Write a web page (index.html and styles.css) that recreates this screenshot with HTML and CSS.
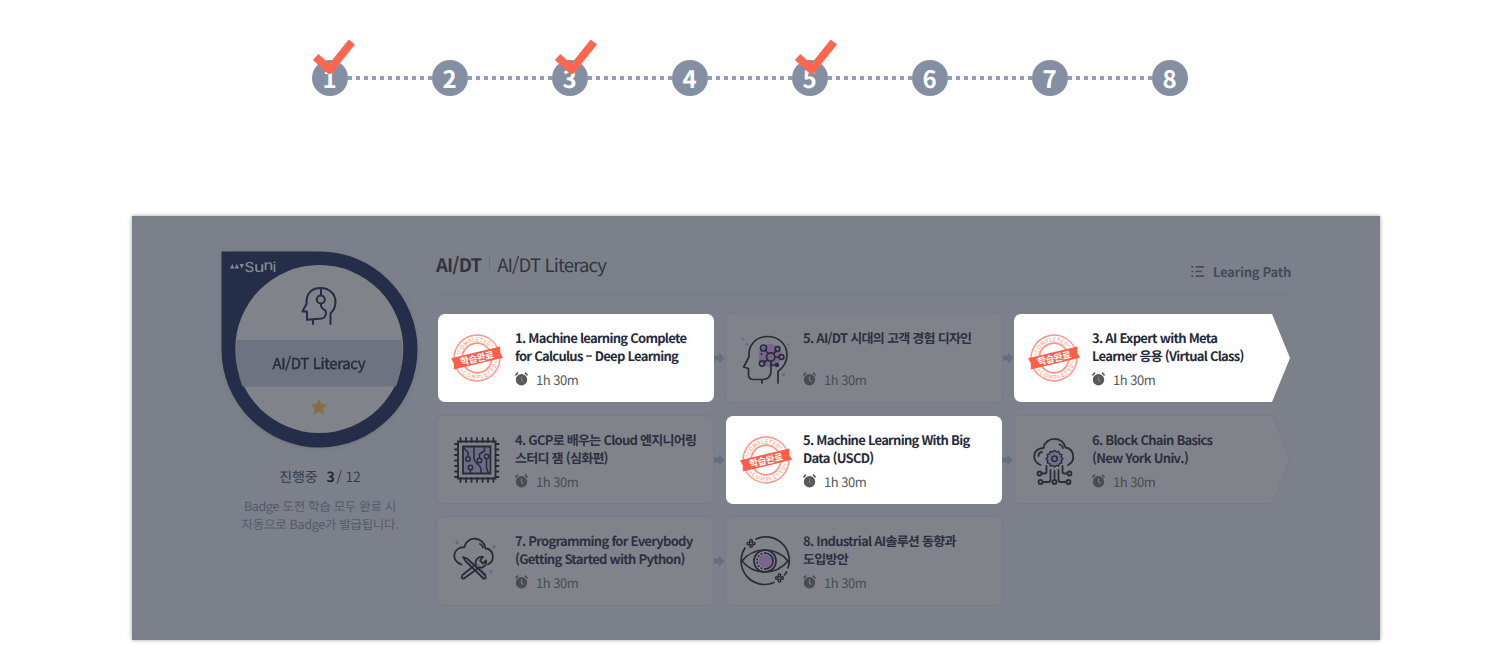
FILE: index.html
```html
<!DOCTYPE html>
<html lang="ko">
<head>
<meta charset="utf-8">
<title>AI/DT Literacy</title>
<link rel="stylesheet" href="styles.css">
</head>
<body>
<svg class="defs" width="0" height="0" aria-hidden="true">
  <defs>
    <symbol id="check" viewBox="0 0 44 36"><path d="M3.600 19 17.500 31.700 39.800 4" fill="none" stroke="#ff6650" stroke-width="8" stroke-linejoin="round"/></symbol>
    <symbol id="clock" viewBox="0 0 12 13"><circle cx="6" cy="7.200" r="5.300"/><path d="M.3 3.200 2.700.6M9.300.6l2.400 2.600" stroke="currentColor" stroke-width="1.500"/><path class="hand" d="M6 4.200v3.200l1.800 1.500" fill="none" stroke-width="1"/></symbol>
    <symbol id="arrow" viewBox="0 0 11 12"><path d="M0 3.500h5V.5L10.500 6 5 11.500v-3H0z" fill="currentColor"/></symbol>
    <symbol id="stamp" viewBox="0 0 54 54">
      <g transform="rotate(-13.500 27 27)">
        <g fill="none" stroke="#ff9485"><circle cx="27" cy="27" r="22.900" stroke-width="1.400"/><circle cx="27" cy="27" r="14.800" stroke-width="1.700"/></g>
        <path id="arc-top" d="M10.500 27a16.500 16.500 0 0 1 33 0" fill="none"/>
        <path id="arc-bottom" d="M5.900 27a21.100 21.100 0 0 0 42.200 0" fill="none"/>
        <g class="stamp-ring"><text><textPath href="#arc-top" startOffset="50%" text-anchor="middle" textLength="34">COMPLETED</textPath></text>
        <text><textPath href="#arc-bottom" startOffset="50%" text-anchor="middle" textLength="42">COMPLETED</textPath></text></g>
        <g fill="#ff8d7c"><circle cx="9.500" cy="18.500" r=".7"/><circle cx="44.500" cy="18.500" r=".7"/><circle cx="9.500" cy="35.500" r=".7"/><circle cx="44.500" cy="35.500" r=".7"/></g>
        <path d="M1.700 21.200h50.600l-1.500 5.800 1.500 5.800H1.700L3.200 27z" fill="#ff5f49"/>
        <text class="stamp-word" x="27" y="30.700" text-anchor="middle" textLength="34">학습완료</text>
      </g>
    </symbol>
    <symbol id="head" viewBox="0 0 54 54">
      <circle cx="32" cy="24.500" r="11.500" fill="#79648f"/>
      <g fill="#79648f"><circle cx="5" cy="8" r="1.500"/><circle cx="9" cy="13.500" r="1.500"/><circle cx="50" cy="13.500" r="1.300"/><circle cx="45.500" cy="43.500" r="1.700"/></g>
      <g fill="none" stroke="#292d36" stroke-width="1.700" stroke-linejoin="round" stroke-linecap="round">
        <path d="M24 52v-3.500h-9q-4.500-.3-4.500-5V37.500l-5-1.500q3-5 5.500-10C10 14 18 5.500 29.500 5.500c12 0 19.500 8.500 19.500 18.500 0 7-3 12-9 16.500V52M24 48.500c6 0 9-3 9-9V31"/>
        <circle cx="32.700" cy="26" r="4.200"/><circle cx="25.500" cy="17" r="3"/><circle cx="39.500" cy="18" r="2.400"/><circle cx="43.500" cy="26" r="2.400"/><circle cx="24" cy="32.500" r="2.600"/><path d="m27.500 19.500 2.700 3M35.600 23l2.300-3M37 26h4M29.500 29l-3.500 2M33 34h5"/>
      </g><circle cx="39" cy="34" r="2.200" fill="#292d36"/><circle cx="23.500" cy="23" r="1.100" fill="#292d36"/>
    </symbol>
    <symbol id="chip" viewBox="0 0 54 54">
      <g fill="none" stroke="#292d36" stroke-width="1.800" stroke-linecap="round">
        <path d="M10.500 5v4M16 5v4M21.500 5v4M27 5v4M32.500 5v4M38 5v4M43.500 5v4M10.500 45v4M16 45v4M21.500 45v4M27 45v4M32.500 45v4M38 45v4M43.500 45v4M5 11h3M5 16.500h3M5 22h3M5 27.500h3M5 33h3M5 38.500h3M5 44h3M45.500 11h3M45.500 16.500h3M45.500 22h3M45.500 27.500h3M45.500 33h3M45.500 38.500h3M45.500 44h3"/>
        <path d="M8 8.500h37.500v37H8z"/><path d="M13 13.500h27.500v27H13z" fill="#6b6d88"/>
        <g stroke-width="1.500"><circle cx="18" cy="26" r="2.200"/><circle cx="29.500" cy="27.500" r="2.200"/><circle cx="36.500" cy="23.500" r="2.200"/><circle cx="20.500" cy="34.500" r="2.200"/><path d="M18 23.500v-4l-4.500-5M24 14v11c0 6 7 6 7 11v4M29.500 25v-4l5-3v-4M36.500 26v9l2 5M20.500 37v3"/></g>
      </g>
    </symbol>
    <symbol id="cloud-gear" viewBox="0 0 54 54">
      <g fill="none" stroke="#292d36" stroke-width="1.800" stroke-linecap="round" stroke-linejoin="round">
        <path d="M13.500 32C4 28 5.500 15.500 16.500 15 18.500 3 36 3 38.500 14.500c9 1.500 10.500 13.500 2.500 17.500M11.500 23q0-3.500 3.500-4M32.500 11.500q3 1 3.500 3.500"/>
        <path d="m27.500 17.300 1.800 1.700 2.400-.6.700 2.400 2.400.7-.6 2.400 1.700 1.800-1.700 1.800.6 2.400-2.400.7-.7 2.400-2.400-.6-1.800 1.700-1.800-1.700-2.400.6-.7-2.400-2.400-.7.600-2.400-1.700-1.800 1.700-1.800-.6-2.400 2.400-.7.7-2.400 2.400.6z" fill="#70728d" stroke-width="1.400"/><circle cx="27.500" cy="25.700" r="2.700" stroke-width="1.500"/>
        <circle cx="12.500" cy="40.500" r="2"/><circle cx="42.500" cy="40.500" r="2"/><circle cx="13.500" cy="49" r="2"/><circle cx="27.500" cy="49" r="2"/><circle cx="41.500" cy="49" r="2"/>
        <path d="M15 40.500h2.500q2 0 2-2V33M40 40.500h-2.500q-2 0-2-2V33M16 49h5.500q2 0 2-2V37M39 49h-5.500q-2 0-2-2V37M27.500 46.500V38"/>
      </g>
    </symbol>
    <symbol id="cloud-tools" viewBox="0 0 54 54">
      <g fill="#6a6c85"><path d="m7 6 2 2.500L7 11 5 8.500zM44 10.500l2 2.500-2 2.500-2-2.500zM41 35l2 2.500-2 2.500-2-2.500z"/><path d="m25 32 10 11 2-3-9-10z"/></g>
      <g fill="none" stroke="#292d36" stroke-width="1.800" stroke-linecap="round" stroke-linejoin="round">
        <path d="M11.500 30.500C.5 26.500 2.500 13.500 14.500 13 17 1 34 2.500 35.500 14.500c8 .5 10.500 12 2.500 16M30 10q2.500 1 3 3.500"/>
        <path d="M13 23l4 1.500 18 16.500q2 4-1.500 3.500L16 27.500z"/><path d="M23 32.500 12.500 41q-2 4 1.500 3.500L27 35M26 31c-1.500-5 2-9 7-8l-3 3.500 3 3 3-3c1 5-3 8-7.500 7"/>
      </g>
    </symbol>
    <symbol id="eye" viewBox="0 0 54 54">
      <circle cx="27" cy="27" r="6.500" fill="#79648f"/>
      <g fill="none" stroke="#292d36" stroke-width="1.700" stroke-linecap="round">
        <path d="M18 5A23.500 23.500 0 0 1 50 34M48.500 38q-1 2-2 3M36 48.500A23.500 23.500 0 0 1 7 14M4 27q9-11 23-11t23 11q-9 11-23 11T4 27z"/><circle cx="27" cy="27" r="11"/><path d="M27 19a8 8 0 0 1 0 16"/><path d="M27 19a8 8 0 0 0 0 16" stroke-dasharray=".5 3"/>
        <g stroke-width="1.400"><circle cx="13" cy="6.700" r="1.300"/><circle cx="13" cy="12.100" r="1.300"/><circle cx="10.300" cy="9.400" r="1.300"/><circle cx="15.700" cy="9.400" r="1.300"/><circle cx="41.500" cy="41.300" r="1.300"/><circle cx="41.500" cy="46.700" r="1.300"/><circle cx="38.800" cy="44" r="1.300"/><circle cx="44.200" cy="44" r="1.300"/></g>
      </g>
    </symbol>
  </defs>
</svg>

<ol class="steps">
  <li class="step">1<svg class="check"><use href="#check"/></svg></li>
  <li class="step">2</li>
  <li class="step">3<svg class="check shifted"><use href="#check"/></svg></li>
  <li class="step">4</li>
  <li class="step">5<svg class="check shifted"><use href="#check"/></svg></li>
  <li class="step">6</li>
  <li class="step">7</li>
  <li class="step">8</li>
</ol>

<main class="panel">
  <aside class="side">
    <svg class="badge" viewBox="0 0 198 198">
      <path d="M1.500 1.500H99A98 98 0 1 1 1.500 99.500z" fill="#242e48"/>
      <circle cx="99.300" cy="99" r="84" fill="#81838b"/>
      <path d="M16.500 90h165.500q2 25-6 46.500H22.500Q14 115 16.500 90z" fill="#6d7380"/>
      <g fill="#85888f"><path d="m10 18.500 2.300-4.500L14.600 18.500zM14.500 18.500l2.300-4.500 2.300 4.500zM19.500 14H24L21.800 18.500z"/></g>
      <g class="logo"><text x="24.500" y="22" textLength="10" lengthAdjust="spacingAndGlyphs">S</text><text x="34" y="22" textLength="10.500" lengthAdjust="spacingAndGlyphs">u</text><text x="43.500" y="20" textLength="10" lengthAdjust="spacingAndGlyphs">n</text><text x="52.500" y="22" textLength="4" lengthAdjust="spacingAndGlyphs">i</text></g>
      <g fill="none" stroke="#242e48" stroke-width="2" stroke-linejoin="round" stroke-linecap="round"><path d="M93 74v-4.500M87 69.500v-8H82.500q2-4 4-7.500C86 43 92 38 100.500 38c9 0 15 6 15 14 0 5-1.500 8-5 11.500V74M87 69.800l15-1.300c4-1 4.500-5 3.500-8-2-1-5-3-4.500-6M101 38v7"/><circle cx="100.800" cy="49.500" r="4"/></g>
      <text class="badge-name" x="99" y="118.500" text-anchor="middle" textLength="93">AI/DT Literacy</text>
      <path d="m99 150 2.200 4.500 5 .7-3.600 3.500.9 5-4.500-2.400-4.500 2.400.9-5-3.600-3.500 5-.7z" fill="#896d43" stroke="#896d43" stroke-linejoin="round"/>
    </svg>
    <p class="progress">진행중<b>3</b><span>/ 12</span></p>
    <p class="note">Badge 도전 학습 모두 완료 시<br>자동으로 Badge가 발급됩니다.</p>
  </aside>

  <section class="content">
    <header class="head">
      <h1><b>AI/DT</b><i></i><span>AI/DT Literacy</span></h1>
      <a class="path-link"><svg width="15" height="13" viewBox="0 0 15 13"><path d="M.5 1.500h2M.5 6.500h2M.5 11.500h2M5 1.500h9M5 6.500h7M5 11.500h9" stroke="#454b5b" stroke-width="1.700"/></svg><span>Learing Path</span></a>
    </header>
    <div class="grid">
      <article class="card done c1"><svg class="pic"><use href="#stamp"/></svg><div class="info"><h2>1. Machine learning Complete<br>for Calculus – Deep Learning</h2><p class="time"><svg><use href="#clock"/></svg>1h 30m</p></div><svg class="arrow"><use href="#arrow"/></svg></article>
      <article class="card c2"><svg class="pic"><use href="#head"/></svg><div class="info"><h2>5. AI/DT 시대의 고객 경험 디자인</h2><p class="time"><svg><use href="#clock"/></svg>1h 30m</p></div><svg class="arrow"><use href="#arrow"/></svg></article>
      <article class="card done last"><svg class="pic"><use href="#stamp"/></svg><div class="info"><h2>3. AI Expert with Meta<br>Learner 응용 (Virtual Class)</h2><p class="time"><svg><use href="#clock"/></svg>1h 30m</p></div></article>

      <article class="card c1"><svg class="pic"><use href="#chip"/></svg><div class="info"><h2>4. GCP로 배우는 Cloud 엔지니어링<br>스터디 잼 (심화편)</h2><p class="time"><svg><use href="#clock"/></svg>1h 30m</p></div><svg class="arrow"><use href="#arrow"/></svg></article>
      <article class="card done c2 row2"><svg class="pic"><use href="#stamp"/></svg><div class="info"><h2>5. Machine Learning With Big<br>Data (USCD)</h2><p class="time"><svg><use href="#clock"/></svg>1h 30m</p></div><svg class="arrow"><use href="#arrow"/></svg></article>
      <article class="card last outline"><svg class="shape" viewBox="0 0 277 89"><path d="M4.500.5H256q3 0 4 3l15.500 41L260 85q-1 3.500-4 3.500H4.500q-4 0-4-4v-80q0-4 4-4z" fill="#81838b" stroke="#777b87"/></svg><svg class="pic"><use href="#cloud-gear"/></svg><div class="info"><h2>6. Block Chain Basics<br>(New York Univ.)</h2><p class="time"><svg><use href="#clock"/></svg>1h 30m</p></div></article>

      <article class="card c1"><svg class="pic"><use href="#cloud-tools"/></svg><div class="info"><h2>7. Programming for Everybody<br>(Getting Started with Python)</h2><p class="time"><svg><use href="#clock"/></svg>1h 30m</p></div><svg class="arrow"><use href="#arrow"/></svg></article>
      <article class="card c2"><svg class="pic"><use href="#eye"/></svg><div class="info"><h2>8. Industrial AI솔루션 동향과<br>도입방안</h2><p class="time"><svg><use href="#clock"/></svg>1h 30m</p></div></article>
    </div>
  </section>
</main>
</body>
</html>
```
FILE: styles.css
```css
* { box-sizing: border-box; }
body { margin: 0; width: 1500px; height: 660px; overflow: hidden; background: #fff; font-family: "Noto Sans CJK KR", sans-serif; text-rendering: geometricPrecision; }
h1, h2, p, ol { margin: 0; padding: 0; }
.defs { position: absolute; }

.steps { list-style: none; display: flex; gap: 84px; width: 876px; margin: 60px 0 0 312px; background: repeating-linear-gradient(90deg, #959db5 0 4px, transparent 4px 8px) 4px 16px / 100% 4px no-repeat; }
.step { position: relative; width: 36px; height: 36px; border-radius: 50%; background: #858fa4; color: #fff; font-size: 24px; font-weight: 700; line-height: 36px; text-align: center; text-indent: -1px; }
.check { position: absolute; left: 0; top: -22px; width: 44px; height: 36px; }
.check.shifted { left: 2px; }

.panel { display: flex; width: 1248px; height: 424px; margin: 120px 0 0 132px; padding-left: 88px; background: #7c808a; box-shadow: 0 0 4px rgba(70, 70, 60, .5); }
.side { width: 200px; padding-top: 34px; text-align: center; }
.badge { display: block; width: 198px; height: 198px; filter: drop-shadow(0 1px 2px rgba(50, 60, 90, .18)); }
.badge-name { font-size: 15px; fill: #292d38; stroke: #292d38; stroke-width: .4px; }
.logo { font-family: Inter, sans-serif; font-size: 14px; font-weight: 500; fill: #85888f; }
.progress { display: flex; justify-content: center; gap: 4px; margin-top: 18px; font-size: 14px; line-height: 22px; letter-spacing: -.2px; color: #363b47; }
.progress b { margin-left: 5px; font-weight: 700; color: #242936; }
.progress span { margin-left: -2px; }
.note { margin-top: 9px; font-size: 12.500px; line-height: 18px; letter-spacing: -.3px; color: #555a6b; white-space: nowrap; }

.content { width: 855px; margin-left: 16px; }
.head { display: flex; justify-content: space-between; height: 79px; border-bottom: 1px solid #747986; }
h1 { display: flex; align-items: center; height: 28px; margin-top: 35px; font-size: 18.500px; font-weight: 400; letter-spacing: -.85px; color: #303542; white-space: nowrap; }
h1 b { font-weight: 700; }
h1 i { width: 1px; height: 14px; margin: 0 7px 4px 8px; background: #6c717e; }
.path-link { display: flex; align-items: center; gap: 8px; width: 100px; height: 20px; margin-top: 45px; font-size: 13px; font-weight: 700; letter-spacing: -.25px; white-space: nowrap; color: #454b5b; }

.grid { display: grid; grid-template-columns: 278px 278px 277px; grid-template-rows: 90px 89px 90px; gap: 12px 11px; padding-top: 18px; }
.card { position: relative; display: flex; border: 1px solid #777b87; border-radius: 7px; background: #81838b; color: #2c313f; padding: 15px 0 0 77px; }
.c2, .last { padding-left: 77px; }
.c1 { padding-left: 78px; }
.pic { position: absolute; left: 13px; top: 17px; width: 54px; height: 54px; }
.c2 .pic, .last .pic { left: 12px; }
.info { white-space: nowrap; }
h2 { height: 36px; font-size: 13px; font-weight: 700; line-height: 18px; letter-spacing: -.73px; }
.time { display: flex; align-items: center; gap: 8px; height: 20px; margin-top: 4px; font-size: 13px; letter-spacing: -.5px; color: #494c54; }
.time svg { width: 13px; height: 14px; fill: #494c54; }
.hand { stroke: #81838b; }
.arrow { position: absolute; left: 277px; top: 38px; width: 11px; height: 12px; color: #666d7d; }

.done { border: 0; background: #fff; color: #252b3a; margin: 1px 0 1px 2px; padding: 15px 0 0 77px; }
.done .time, .done .time svg { color: #58595b; }
.done .time svg { fill: #58595b; }
.done .hand { stroke: #fff; }
.done .pic { left: 12px; }
.done .arrow { left: 276px; }
.c2.done { margin: 1px 1px 0; }
.c2.done .pic { left: 13px; }
.done.last { margin: 1px 1px 1px 0; padding-left: 78px; clip-path: polygon(0 0, 258px 0, 276px 44px, 258px 88px, 0 88px); }
.done.last .pic { left: 13px; }
.outline { border: 0; background: none; padding: 16px 0 0 78px; }
.outline .pic { left: 13px; top: 18px; }
.shape { position: absolute; left: 0; top: 0; width: 277px; height: 89px; }
.outline .info { position: relative; }
.stamp-ring { font-size: 5.500px; fill: #ff8d7c; }
.stamp-word { font-size: 9.500px; font-weight: 700; fill: #fff; }
```
